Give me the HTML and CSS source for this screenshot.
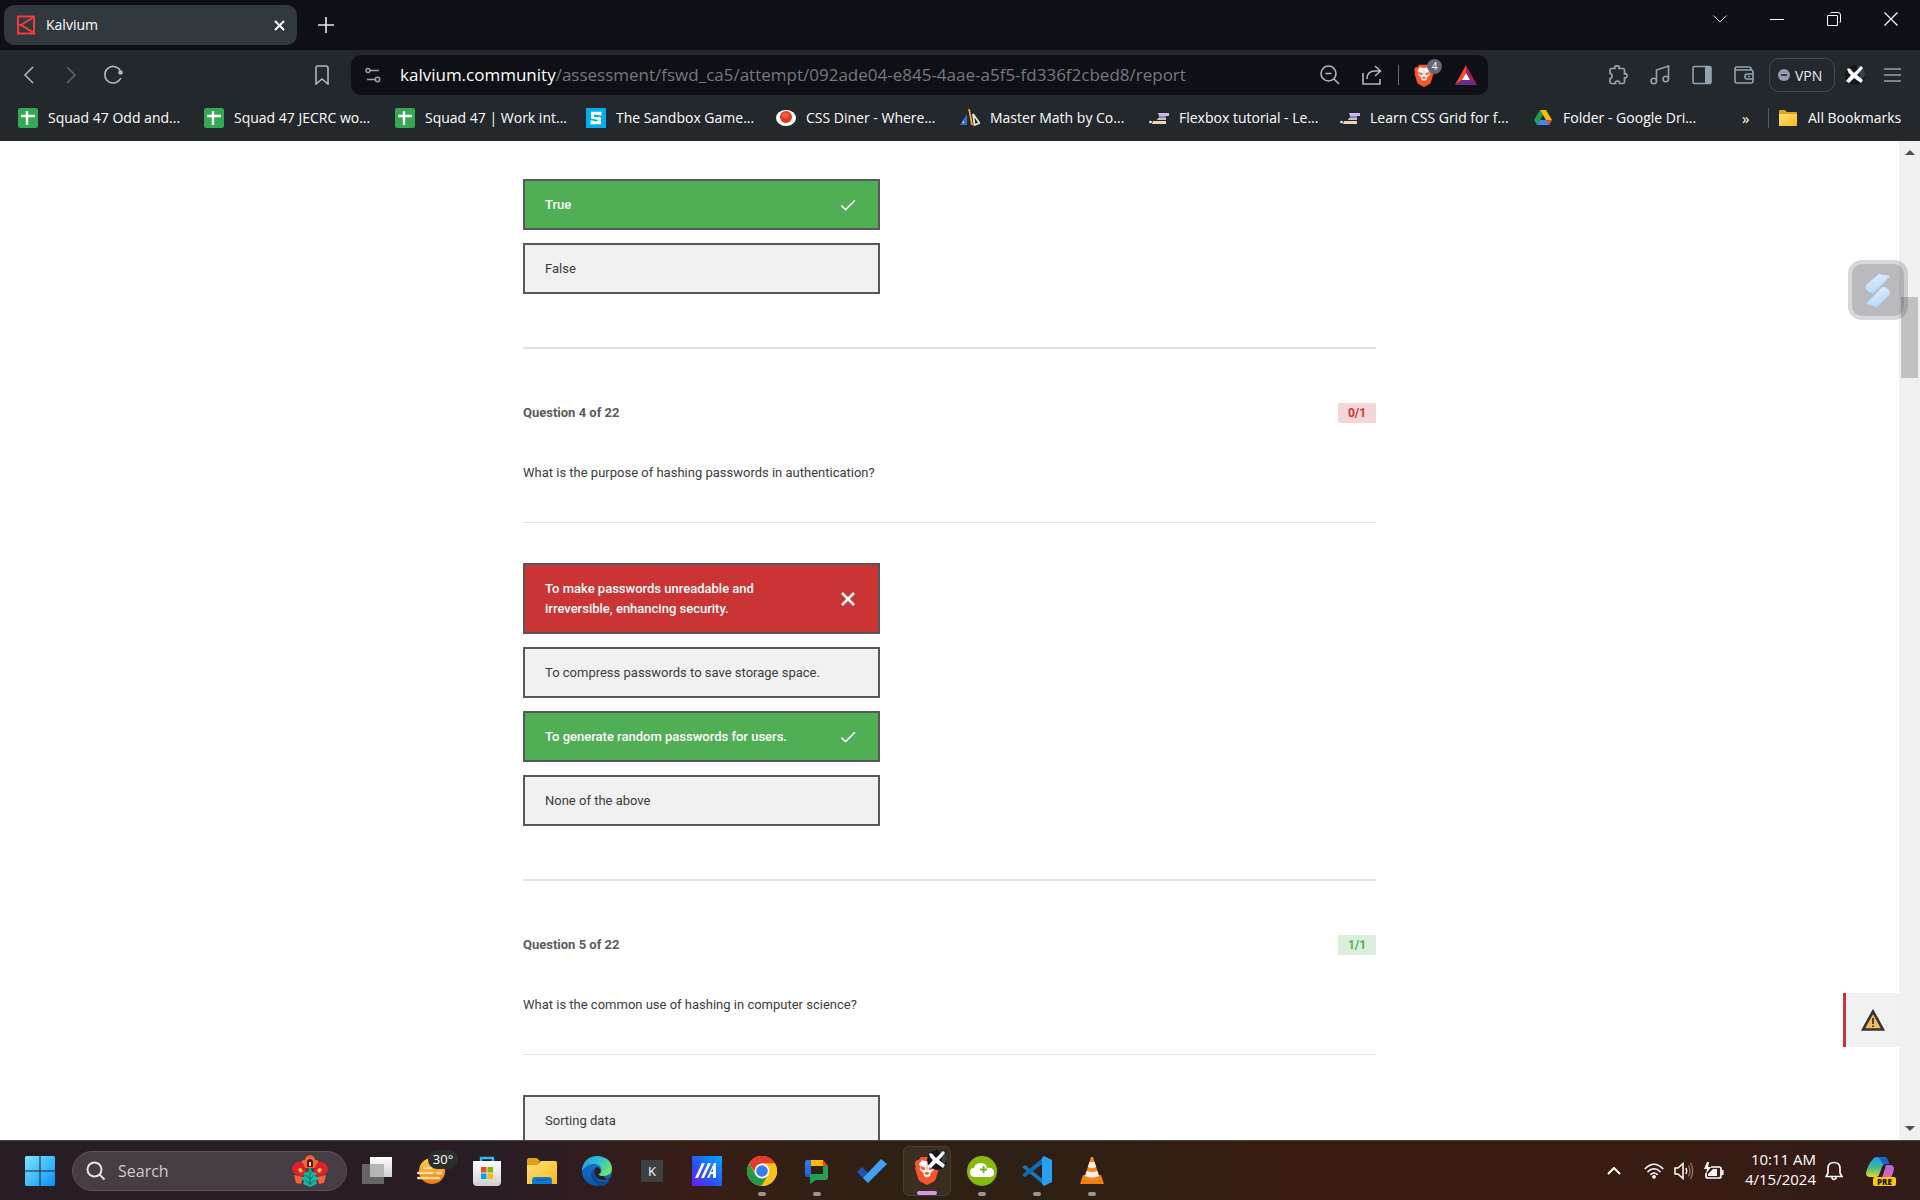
FILE: index.html
```html
<!DOCTYPE html>
<html lang="en">
<head>
<meta charset="utf-8">
<title>Kalvium</title>
<link rel="stylesheet" href="styles.css">
</head>
<body>
<svg class="defs" aria-hidden="true">
  <defs>
    <symbol id="sheet" viewBox="0 0 20 20"><rect width="20" height="20" rx="2" fill="#34a853"/><path d="M9 3v14M3 8h14" stroke="#fff" stroke-width="2.4"/></symbol>
    <symbol id="fcc" viewBox="0 0 20 20"><path d="M9 5h11v3H10z" fill="#c9b6f2"/><path d="M10 8h7v2h-7z" fill="#8f86a8"/><path d="M9 10h8v2H8z" fill="#b9c9cb"/><path d="M4 13h13v3H3z" fill="#f3d3b3"/><circle cx="1.500" cy="14" r="1.300" fill="#fff"/></symbol>
    <symbol id="lion" viewBox="0 0 24 28"><path d="M6 1h12l2 3 2-.5L24 7l-1 3 .5 2-3 10q-.5 1.500-2 2.500L12 28l-6.500-3.500q-1.500-1-2-2.500l-3-10L1 10 0 7l2-3.500L4 4z" fill="#fb542b"/><path d="M12 5l5-1 3 4-1.500 2 .5 3-4 4 .5 1.500-3.500 3-3.500-3 .5-1.500-4-4 .5-3L4 8l3-4z" fill="#fff"/><path d="M6 10l4 1.500-.5 2-3-1zM18 10l-4 1.500.5 2 3-1zM10 17l2 1 2-1-.5-1.200h-3zM12 7v7M10 22l2-1.500 2 1.500-2 1.500z" fill="#fb542b" stroke="#fb542b" stroke-width=".6"/></symbol>
    <symbol id="avatar" viewBox="0 0 20 20"><circle cx="10" cy="10" r="10" fill="#14161c"/><path d="M12 0a10 10 0 0 1 8 10l-4 6z" fill="#38404c"/><path d="M2 4q3-2 5 2l2 2 7-7 2 2-6 7 6 5-2 3-7-5-5 5-3-2 5-6q-3-2-4-6z" fill="#fff"/></symbol>
    <symbol id="check" viewBox="0 0 24 24"><path d="M9 16.170 4.830 12l-1.420 1.410L9 19 21 7l-1.410-1.410z" fill="currentColor"/></symbol>
    <linearGradient id="win" x2="1" y2="1"><stop stop-color="#7be9ff"/><stop offset="1" stop-color="#0a90f5"/></linearGradient>
    <linearGradient id="gray" x2="0" y2="1"><stop stop-color="#fff"/><stop offset="1" stop-color="#cfcfcf"/></linearGradient>
    <linearGradient id="sun" x2="0" y2="1"><stop stop-color="#ffd34d"/><stop offset="1" stop-color="#ee7410"/></linearGradient>
    <linearGradient id="gold" x2="1" y2="1"><stop stop-color="#ffe07a"/><stop offset="1" stop-color="#f9b917"/></linearGradient>
    <linearGradient id="edgeTop" x2="1" y2=".5"><stop stop-color="#1d9be0"/><stop offset=".6" stop-color="#35c1d0"/><stop offset="1" stop-color="#6fe06a"/></linearGradient>
    <linearGradient id="edgeLow" x2="0" y2="1"><stop stop-color="#1079d0"/><stop offset="1" stop-color="#0f57a8"/></linearGradient>
    <linearGradient id="asus" x1="1" x2="0" y2="1"><stop stop-color="#00a8ff"/><stop offset=".6" stop-color="#2a50f5"/><stop offset="1" stop-color="#6a1bff"/></linearGradient>
    <linearGradient id="cop" x2="0" y2="1"><stop stop-color="#1d9cf0"/><stop offset=".5" stop-color="#3bb892"/><stop offset="1" stop-color="#e8d52c"/></linearGradient>
    <linearGradient id="cop2" x2="0" y2="1"><stop stop-color="#a965f0"/><stop offset="1" stop-color="#f8687c"/></linearGradient>
    <linearGradient id="ribbon" x2=".4" y2="1"><stop stop-color="#e4f2fe"/><stop offset="1" stop-color="#b6d9fb"/></linearGradient>
  </defs>
</svg>

<header class="browser">
  <div class="tabstrip">
    <div class="tab">
      <svg width="18" height="20" viewBox="0 0 18 20"><path d="M1 1.500h16v17H1zM17 2 4 10l13 8M2 10h3" fill="none" stroke="#f23b3b" stroke-width="2"/></svg>
      <span class="tab-title">Kalvium</span>
      <button class="bare" aria-label="Close tab"><svg width="11" height="11" viewBox="0 0 11 11"><path d="M1 1l9 9M10 1l-9 9" stroke="#fff" stroke-width="2"/></svg></button>
    </div>
    <button class="bare new-tab" aria-label="New tab"><svg width="16" height="16" viewBox="0 0 16 16"><path d="M8 0v16M0 8h16" stroke="#e8e8ec" stroke-width="1.600"/></svg></button>
    <div class="window-controls">
      <button class="bare" aria-label="Search tabs"><svg width="14" height="8" viewBox="0 0 14 8"><path d="M.5.5 7 7 13.500.5" fill="none" stroke="#d5d5d8"/></svg></button>
      <button class="bare" aria-label="Minimize"><svg width="14" height="14" viewBox="0 0 14 14"><path d="M0 7.500h14" stroke="#fff"/></svg></button>
      <button class="bare" aria-label="Restore"><svg width="14" height="14" viewBox="0 0 14 14"><path d="M.5 3.500h10v10H.5zM3 1.500q.5-1 2-1h6q2.500 0 2.500 2.500v6q0 1.500-1 2" fill="none" stroke="#fff"/></svg></button>
      <button class="bare" aria-label="Close window"><svg width="14" height="14" viewBox="0 0 14 14"><path d="M.5.5l13 13M13.500.5l-13 13" stroke="#fff" stroke-width="1.200"/></svg></button>
    </div>
  </div>

  <div class="toolbar">
    <div class="nav">
      <button class="bare" aria-label="Back"><svg width="20" height="20" viewBox="0 0 20 20"><path d="M14 2 6 10l8 8" fill="none" stroke="#a9b8c2" stroke-width="1.600"/></svg></button>
      <button class="bare" aria-label="Forward"><svg width="20" height="20" viewBox="0 0 20 20"><path d="m6 2 8 8-8 8" fill="none" stroke="#5d666c" stroke-width="1.600"/></svg></button>
      <button class="bare" aria-label="Reload"><svg width="20" height="20" viewBox="0 0 20 20"><path d="M17 5a8.300 8.300 0 1 0 .8 8M17 5v3" fill="none" stroke="#a9b8c2" stroke-width="1.600"/><circle cx="17.500" cy="7.500" r="2.300" fill="#a9b8c2"/></svg></button>
    </div>
    <button class="bare save" aria-label="Bookmark this page"><svg width="14" height="20" viewBox="0 0 14 20"><path d="M1 3q0-2 2-2h8q2 0 2 2v16l-6-5-6 5z" fill="none" stroke="#a9b8c2" stroke-width="1.600"/></svg></button>
    <div class="address">
      <svg class="site-info" width="16" height="16" viewBox="0 0 16 16"><g fill="none" stroke="#a0a2a8" stroke-width="1.500"><circle cx="3" cy="3.500" r="2"/><path d="M5 3.500h9M2 12.500h8"/><circle cx="12.500" cy="12.500" r="2.200"/></g></svg>
      <div class="url" role="textbox" aria-label="Address"><span class="host">kalvium.community</span>/assessment/fswd_ca5/attempt/092ade04-e845-4aae-a5f5-fd336f2cbed8/report</div>
      <button class="bare" aria-label="Zoom"><svg width="20" height="20" viewBox="0 0 20 20"><g fill="none" stroke="#b4b6bb" stroke-width="1.600"><circle cx="8.500" cy="8.500" r="7.500"/><path d="m14 14 5 5M5.500 8.500h6"/></g></svg></button>
      <button class="bare share" aria-label="Share"><svg width="20" height="20" viewBox="0 0 20 20"><path d="M1 8v11h17v-5M5 14q0-8 8-8h5M13 1l5.500 5-5.500 5" fill="none" stroke="#b4b6bb" stroke-width="1.600"/></svg></button>
      <span class="bar"></span>
      <button class="bare shield" aria-label="Brave Shields"><svg width="20" height="23"><use href="#lion"/></svg><span class="count">4</span></button>
      <button class="bare" aria-label="Brave Rewards"><svg width="22" height="20" viewBox="0 0 22 20"><path d="M11 0v8l-4 7-7 5z" fill="#ff4724"/><path d="m11 0 11 20-7-5-4-7z" fill="#9e1f63"/><path d="M0 20h22l-7-5H7z" fill="#662d91"/><path d="m11 8 4 7H7z" fill="#fff"/></svg></button>
    </div>
    <div class="tools">
      <button class="bare" aria-label="Extensions"><svg width="20" height="20" viewBox="0 0 20 20"><path d="M2 5q0-1.500 1.500-1.500H7Q6 .8 9 .8t2 2.700h4q1.500 0 1.500 1.500v4q2.500-.8 2.500 1.800t-2.500 1.900V17q0 1.500-1.500 1.500h-3.500q.5-2.500-2-2.500t-2 2.500h-4Q2 18.500 2 17v-3.500q2 0 2-2.500T2 8.500z" fill="none" stroke="#93a3ae" stroke-width="1.700"/></svg></button>
      <button class="bare" aria-label="Media"><svg width="20" height="20" viewBox="0 0 20 20"><g fill="none" stroke="#93a3ae" stroke-width="1.600"><circle cx="3.800" cy="16" r="2.700"/><circle cx="15.800" cy="14" r="2.700"/><path d="M6.500 16V5l12-4v13"/></g></svg></button>
      <button class="bare" aria-label="Sidebar"><svg width="20" height="20" viewBox="0 0 20 20"><rect x="1" y="1.500" width="18" height="17" rx="1.500" fill="none" stroke="#93a3ae" stroke-width="1.600"/><path d="M13 1h6v18h-6z" fill="#93a3ae"/></svg></button>
      <button class="bare" aria-label="Wallet"><svg width="20" height="20" viewBox="0 0 20 20"><g fill="none" stroke="#93a3ae" stroke-width="1.600"><path d="M17 5V4q0-2-2-2H3Q1 2 1 4v12q0 2 2 2h14q2 0 2-2V7q0-2-2-2H3Q1 5 1 4"/><path d="M19 9h-6q-2 0-2 2.500t2 2.500h6M14 11.500h2"/></g></svg></button>
      <button class="vpn"><svg width="12" height="12" viewBox="0 0 12 12"><circle cx="6" cy="6" r="6" fill="#9899b0"/><path d="M3 6h6" stroke="#23272b" stroke-width="1.600"/></svg>VPN</button>
      <button class="bare" aria-label="Profile"><svg width="20" height="20"><use href="#avatar"/></svg></button>
      <button class="bare" aria-label="Menu"><svg width="17" height="14" viewBox="0 0 17 14"><path d="M0 1h17M0 7h17M0 13h17" stroke="#93a3ae" stroke-width="1.500"/></svg></button>
    </div>
  </div>

  <nav class="bookmarks">
    <a href="#"><svg><use href="#sheet"/></svg>Squad 47 Odd and...</a>
    <a href="#"><svg><use href="#sheet"/></svg>Squad 47 JECRC wo...</a>
    <a href="#"><svg><use href="#sheet"/></svg>Squad 47 | Work int...</a>
    <a href="#"><svg viewBox="0 0 20 20"><path d="M0 0h20v20H0z" fill="#00adef"/><path d="M14 7.500V5.300H6.500v4l7 1.400v4H6v-2.200" fill="none" stroke="#fff" stroke-width="3"/></svg>The Sandbox Game...</a>
    <a href="#"><svg viewBox="0 0 20 20"><ellipse cx="10" cy="10" rx="10" ry="8" fill="#fff"/><circle cx="10" cy="9" r="6" fill="#e0381c"/><ellipse cx="9.500" cy="7.500" rx="3.500" ry="3" fill="#f8593c"/></svg>CSS Diner - Where...</a>
    <a href="#"><svg viewBox="0 0 20 20"><path d="M7 6v11H0z" fill="#3d6fc4"/><path d="M4 12v3H2z" fill="#b8d0ff"/><path d="m8 1 2 .2 3 15.800h-2L9.500 8z" fill="#f0a33a"/><path d="M13 6l6.500 9-5 2z" fill="none" stroke="#e6ecd2" stroke-width="1.800"/></svg>Master Math by Co...</a>
    <a href="#"><svg><use href="#fcc"/></svg>Flexbox tutorial - Le...</a>
    <a href="#"><svg><use href="#fcc"/></svg>Learn CSS Grid for f...</a>
    <a href="#"><svg viewBox="0 0 20 20"><path d="M7 2 1 12l3 5L10 7z" fill="#1e9e4e"/><path d="M7 2h6l6 10h-6z" fill="#fbbc05"/><path d="M4 17l3-5h12l-3 5z" fill="#4285f4"/><path d="M13 12h6l-3 5z" fill="#ea4335"/></svg>Folder - Google Dri...</a>
    <button class="bare more" aria-label="More bookmarks">»</button>
    <a href="#" class="all"><svg viewBox="0 0 20 20"><path d="M1 3q0-1 1-1h5l2 2h9q1 0 1 1v12q0 1-1 1H2q-1 0-1-1z" fill="#e0a21b"/><path d="M1 6h18v11q0 1-1 1H2q-1 0-1-1z" fill="url(#gold)"/></svg>All Bookmarks</a>
  </nav>
</header>

<div class="viewport">
  <main class="report">
    <section class="question">
      <ul class="options">
        <li class="option correct"><span>True</span><svg><use href="#check"/></svg></li>
        <li class="option"><span>False</span></li>
      </ul>
    </section>

    <section class="question">
      <div class="heading"><h2>Question 4 of 22</h2><span class="score lost">0/1</span></div>
      <p class="prompt">What is the purpose of hashing passwords in authentication?</p>
      <ul class="options">
        <li class="option wrong"><span>To make passwords unreadable and irreversible, enhancing security.</span><svg viewBox="0 0 20 20"><path d="m4 4 12 12M16 4 4 16" stroke="currentColor" stroke-width="2.600"/></svg></li>
        <li class="option"><span>To compress passwords to save storage space.</span></li>
        <li class="option correct"><span>To generate random passwords for users.</span><svg><use href="#check"/></svg></li>
        <li class="option"><span>None of the above</span></li>
      </ul>
    </section>

    <section class="question">
      <div class="heading"><h2>Question 5 of 22</h2><span class="score won">1/1</span></div>
      <p class="prompt">What is the common use of hashing in computer science?</p>
      <ul class="options">
        <li class="option"><span>Sorting data</span></li>
      </ul>
    </section>
  </main>

  <div class="scrollbar" aria-hidden="true">
    <svg width="10" height="5" viewBox="0 0 10 5"><path d="M5 0l5 5H0z" fill="#505050"/></svg>
    <div class="track"><div class="thumb"></div></div>
    <svg width="10" height="5" viewBox="0 0 10 5"><path d="M0 0h10L5 5z" fill="#505050"/></svg>
  </div>

  <button class="assistant" aria-label="Open assistant"><svg width="26" height="34" viewBox="0 0 26 34"><path d="M14 1l11 2L9 20q-5 1-8-4-1-3 1-5z" fill="url(#ribbon)"/><path d="M12 34 1 31l16-17q6 0 8 5 0 3-2 4z" fill="url(#ribbon)"/></svg></button>
  <button class="report-issue" aria-label="Report an issue"><svg width="24" height="22" viewBox="0 0 24 22"><path d="M12 2.500 22 20.500H2z" fill="#f6bb5c" stroke="#333638" stroke-width="2.600"/><path d="M12 9v6M12 16.500v1.500" stroke="#333638" stroke-width="1.800"/></svg></button>
</div>

<footer class="taskbar">
  <button class="bare start" aria-label="Start"><svg width="30" height="30" viewBox="0 0 30 30"><path d="M1 0h13.500v14.500H0V1zM15.500 0H29l1 1v13.500H15.500zM0 15.500h14.500V30H1l-1-1zM15.500 15.500H30V29l-1 1H15.500z" fill="url(#win)"/></svg></button>
  <label class="search">
    <svg width="20" height="20" viewBox="0 0 20 20"><g fill="none" stroke="#e6e3e6" stroke-width="2"><circle cx="8.500" cy="8.500" r="7"/><path d="m13.500 13.500 5 5"/></g></svg>
    <input type="text" placeholder="Search" aria-label="Search">
    <svg width="36" height="32" viewBox="0 0 36 32"><path d="M10 11Q8 4 13 5q0-4 5-5 5 1 5 5 5-1 3 6-3 3-8 2-5 1-8-2z" fill="#ee6a35"/><path d="M15 6q3-4 6 0v6h-6z" fill="#6a1410"/><path d="M17 7h2v4h-2z" fill="#ffd9b0"/><path d="M2 9Q8 4 12 10l3 8-4 3Q2 21 0 15q0-4 2-6zM34 9q-6-5-10 1l-3 8 4 3q9 0 11-6 0-4-2-6z" fill="#d8232d"/><path d="M2 20l9 2-2 7-5-1zM34 20l-9 2 2 7 5-1z" fill="#f4603b"/><path d="m6 14 3-1 2 3-3 2zM30 14l-3-1-2 3 3 2z" fill="#f7c531"/><path d="M18 12l2 5 5 1-2 3 4 2-3 3 1 3-7 3-7-3 1-3-3-3 4-2-2-3 5-1z" fill="#18b8a0"/><path d="M18 16v14M14 20l4 5 4-5M13 25l5 4 5-4" fill="none" stroke="#08705f"/></svg>
  </label>
  <div class="apps">
    <button class="bare" aria-label="Task view"><svg width="30" height="30" viewBox="0 0 30 30"><path d="M8 1h22v20H8z" fill="url(#gray)"/><path d="M0 8h22v20H0z" fill="#777" opacity=".8"/><path d="M8 8h14v13H8z" fill="#b5b5b5"/></svg></button>
    <button class="bare weather" aria-label="Weather"><svg width="30" height="30" viewBox="0 0 30 30"><circle cx="15" cy="15" r="13" fill="url(#sun)"/><path d="M7 12h7M1 17h15M20 17h4M1 22h21" stroke="#f5dc9c" stroke-width="2.400" stroke-linecap="round"/></svg><span class="degrees">30°</span></button>
    <button class="bare" aria-label="Store"><svg width="30" height="30" viewBox="0 0 30 30"><path d="M9 7V2h12v5" fill="none" stroke="#35b8ef" stroke-width="2.400"/><path d="M1 5h28v21q0 4-4 4H5q-4 0-4-4z" fill="url(#gray)"/><path d="M9 11h5.500v5.500H9z" fill="#f04e23"/><path d="M15.500 11H21v5.500h-5.500z" fill="#7fba00"/><path d="M9 17.500h5.500V23H9z" fill="#00a4ef"/><path d="M15.500 17.500H21V23h-5.500z" fill="#ffb900"/></svg></button>
    <button class="bare" aria-label="File Explorer"><svg width="30" height="30" viewBox="0 0 30 30"><path d="M0 4q0-2 2-2h8l3 3-3 5H0z" fill="#e0a015"/><path d="M0 9h10l4-4h14q2 0 2 2v21H0z" fill="url(#gold)"/><path d="M5 28v-4q0-3 3-3h14q3 0 3 3v4z" fill="#0f7bd4"/><path d="M9 24h12" stroke="#0a5ea8" stroke-width="1.500"/></svg></button>
    <button class="bare" aria-label="Edge"><svg width="30" height="30" viewBox="0 0 30 30"><circle cx="15" cy="15" r="15" fill="url(#edgeLow)"/><path d="M0 15Q1 1 15 0q14 1 15 12 0 8-9 8-4 0-4-2 3-2 2-6Q16 7 10 8 3 9 0 15z" fill="url(#edgeTop)"/><path d="M11 14q-3 3-1 9 3 7 10 7 5-1 8-6-3 2-7 2-8 0-10-12z" fill="#0b4a98"/><path d="M14 11q-3 3-1 8 2 5 9 5 4 0 6-2 0 1-1 2-3-1-6-4h-1q-4 0-3-2 3-2 1-5-1-2-4-2z" fill="#2a2023"/></svg></button>
    <button class="bare" aria-label="Keyboard app"><span class="key">K</span></button>
    <button class="bare" aria-label="MyASUS"><svg width="30" height="30" viewBox="0 0 30 30"><path d="M0 0h30v30H0z" fill="url(#asus)"/><path d="M3 22 10 7h3L6 22zM9 22l7-15h3l-7 15z" fill="#fff"/><path fill-rule="evenodd" d="M15 22l7-15h2v15h-3v-4h-2l-2 4zM21 12l-2 4h2z" fill="#fff"/></svg></button>
    <button class="bare running" aria-label="Chrome"><svg width="30" height="30" viewBox="0 0 30 30"><circle cx="15" cy="15" r="15" fill="#fbc116"/><path d="M2 7.500A15 15 0 0 1 28 7.500H15L9 18z" fill="#e33b2e"/><path d="M2 7.500A15 15 0 0 0 14.500 30L21 19l-12 .500z" fill="#229a4a"/><path d="M15 7.500h13A15 15 0 0 1 14.500 30L22 18z" fill="#fbc116"/><circle cx="15" cy="15" r="7.500" fill="#fff"/><circle cx="15" cy="15" r="5.800" fill="#3b7ded"/></svg></button>
    <button class="bare running" aria-label="Chat"><svg width="30" height="30" viewBox="0 0 30 30"><path d="M9 4h12v6H9z" fill="#ffb904"/><path d="M3 6q0-2 2-2h4v6H3z" fill="#3075e0"/><path d="M3 10h6v8H3q0 2 0 0z" fill="#2a6de0"/><path d="M21 4l5 6h-5z" fill="#e8432f"/><path d="M3 17h6v4H5q-2 0-2-2z" fill="#1b64c8"/><path d="M21 10h5v12q0 2-2 2H14l-6 4V18h13z" fill="#24a150"/></svg></button>
    <button class="bare" aria-label="To Do"><svg width="30" height="30" viewBox="0 0 30 30"><path d="M0 16l5-5 10 10-4 6z" fill="#1e56b8"/><path d="M11 27 6 22 24 3l6 5z" fill="#41a0f0"/></svg></button>
    <button class="bare running active" aria-label="Brave"><svg width="26" height="29"><use href="#lion"/></svg><svg class="profile" width="20" height="20"><use href="#avatar"/></svg></button>
    <button class="bare running" aria-label="Cloud sync"><svg width="30" height="30" viewBox="0 0 30 30"><circle cx="15" cy="15" r="15" fill="#86bb0e"/><path d="M8 21q-5 0-5-5 0-4 4-4 1-5 7-5 5 0 6 5 7-1 7 5 0 4-5 4z" fill="#fff"/><path d="M16.500 10v7M13 13.500h7" stroke="#7ab51d" stroke-width="2"/></svg></button>
    <button class="bare running" aria-label="Visual Studio Code"><svg width="30" height="30" viewBox="0 0 30 30"><path d="M0 11l3-2 20 16v5z" fill="#1577c0"/><path d="M0 19l3 2L23 6V0z" fill="#0f6cb5"/><path d="M22 0l8 4v22l-8 4-2-2V2z" fill="#26a0f0"/></svg></button>
    <button class="bare running" aria-label="VLC"><svg width="30" height="30" viewBox="0 0 30 30"><path d="M6 19h18l3 9H3z" fill="#f07f0e"/><path d="M14 1h2l7 22q-8 4-16 0z" fill="#f58a1c"/><path d="m12.500 6-1.700 5q4 2 8.400 0l-1.700-5zM9.500 15 8 20q7 3 14 0l-1.500-5q-5 2-11 0z" fill="#f1eeeb"/></svg></button>
  </div>
  <div class="tray">
    <button class="bare" aria-label="Show hidden icons"><svg width="14" height="8" viewBox="0 0 14 8"><path d="m1 7 6-6 6 6" fill="none" stroke="#fff" stroke-width="2"/></svg></button>
    <button class="bare network" aria-label="Network, volume and battery">
      <svg width="20" height="16" viewBox="0 0 20 16"><g fill="none" stroke="#fff" stroke-width="1.600"><path d="M.8 6q9.200-9.500 18.400 0M3.500 9q6.500-6.500 13 0M6.300 11.800q3.700-3.600 7.400 0"/></g><circle cx="10" cy="13.800" r="1.900" fill="#fff"/></svg>
      <svg width="20" height="18" viewBox="0 0 20 18"><path d="M1 6h3l5-4.500v15L4 12H1z" fill="none" stroke="#fff" stroke-width="1.500"/><path d="M12 6q1.500 3 0 6" fill="none" stroke="#fff" stroke-width="1.500"/><path d="M14.500 3.500q3 5.500 0 11M16.500 1q4.500 8 0 16" fill="none" stroke="#8a6c64" stroke-width="1.500"/></svg>
      <svg width="20" height="18" viewBox="0 0 20 18"><path d="M7 5h8q2 0 2 2v7q0 2-2 2H4q-2 0-2-2v-3" fill="none" stroke="#fff" stroke-width="1.700"/><path d="M18 8h1.500v5H18zM9 7h4v7H4v-2z" fill="#fff"/><path d="m3 0-3 7h3l-1 5 5-7H4l1-5z" fill="#fff"/></svg>
    </button>
    <div class="clock"><span>10:11 AM</span><span>4/15/2024</span></div>
    <button class="bare" aria-label="Notifications"><svg width="18" height="20" viewBox="0 0 18 20"><path d="M9 1.500q6 0 6 6V12l2 3.500H1L3 12V7.500q0-6 6-6zM6.500 16.500q2.500 4 5 0" fill="none" stroke="#fff" stroke-width="1.600"/></svg></button>
    <button class="bare copilot" aria-label="Copilot"><svg width="30" height="28" viewBox="0 0 30 28"><path d="M7 2q1-2 4-2h7q3 0 4 4l1 3h-4q-2 0-3 3l-3 8q-1 2-3 2H4q-4 0-4-4 2-9 7-14z" fill="url(#cop)"/><path d="M12 0h6q3 0 4 4l1 3h-6z" fill="#1c62d4"/><path d="M20 8h4q4 0 4 4-2 8-4 11-1 2-4 2h-7l3-4z" fill="url(#cop2)"/></svg><span class="pre">PRE</span></button>
  </div>
</footer>
</body>
</html>
```
FILE: styles.css
```css
* {
  box-sizing: border-box;
}

body {
  display: flex;
  flex-direction: column;
  height: 100vh;
  margin: 0;
  overflow: hidden;
  background: #fff;
  font-family: "Open Sans", "Noto Sans", sans-serif;
}

svg {
  display: block;
  flex: none;
}

.defs {
  position: absolute;
  width: 0;
  height: 0;
}

.bare {
  display: grid;
  place-items: center;
  flex: none;
  padding: 0;
  border: 0;
  background: none;
  color: inherit;
  font: inherit;
}

/* Browser chrome */
.browser {
  flex: none;
  background: #23282c;
  color: #fff;
}

.tabstrip {
  display: flex;
  align-items: center;
  height: 50px;
  padding: 0 1px 0 4px;
  background: #0e1015;
}

.tab {
  display: flex;
  align-items: center;
  gap: 11px;
  width: 293px;
  height: 40px;
  padding: 0 12px 0 13px;
  border-radius: 10px;
  background: #31393e;
}

.tab-title {
  flex: 1;
  padding-bottom: 2px;
  font-size: 14px;
}

.new-tab {
  width: 58px;
  height: 40px;
}

.window-controls {
  display: flex;
  align-self: flex-start;
  margin-left: auto;
}

.window-controls .bare {
  width: 57px;
  height: 38px;
}

.toolbar {
  display: flex;
  align-items: center;
  height: 50px;
  padding: 0 11px 0 8px;
}

.nav {
  display: flex;
}

.nav .bare,
.tools .bare {
  width: 42px;
  height: 40px;
}

.save {
  width: 56px;
  height: 40px;
  margin-left: 160px;
}

.address {
  display: flex;
  flex: 1;
  align-items: center;
  height: 40px;
  margin-left: 1px;
  padding: 0 11px 0 14px;
  border-radius: 10px;
  background: #0e1015;
}

.url {
  flex: 1;
  padding: 0 0 2px 19px;
  color: #77797e;
  font-size: 17px;
  white-space: nowrap;
}

.host {
  color: #fff;
}

.share {
  margin: 0 16px 0 22px;
}

.bar {
  width: 1px;
  height: 20px;
  background: #6b6d72;
}

.shield {
  position: relative;
  margin: 0 21px 0 15px;
}

.count {
  position: absolute;
  top: -5px;
  left: 13px;
  width: 15px;
  border-radius: 8px;
  background: #666878;
  font-size: 10px;
  line-height: 15px;
}

.tools {
  display: flex;
  align-items: center;
  margin-left: 109px;
}

.tools .bare:nth-last-child(2) {
  width: 40px;
}

.tools .bare:last-child {
  width: 34px;
}

.vpn {
  display: flex;
  align-items: center;
  gap: 5px;
  width: 66px;
  height: 34px;
  margin-left: 4px;
  padding: 0 8px;
  border: 1px solid #414b4e;
  border-radius: 10px;
  background: none;
  color: #e9edf0;
  font: 14px "Open Sans", "Noto Sans", sans-serif;
}

.bookmarks {
  display: grid;
  grid-template-columns: 186px 191px 191px 190px 184px 189px 191px 193px 1fr 36px 142px;
  align-items: center;
  height: 41px;
  padding: 0 0 6px 18px;
}

.bookmarks a {
  display: flex;
  align-items: center;
  gap: 10px;
  color: #fff;
  font-size: 14px;
  text-decoration: none;
  white-space: nowrap;
}

.bookmarks svg {
  width: 20px;
  height: 20px;
}

.bookmarks .more {
  justify-self: start;
  font-size: 15px;
}

.bookmarks .all {
  padding-left: 9px;
  border-left: 1px solid #565b5f;
}

.bookmarks .all {
  margin-left: -10px;
}

/* Page */
.viewport {
  position: relative;
  display: flex;
  flex: 1;
  min-height: 0;
  overflow: hidden;
}

.report {
  flex: 1;
  max-width: 853px;
  margin: 0 auto;
  padding-top: 38px;
  color: #3c3c3c;
  font-family: Roboto, sans-serif;
  font-size: 13px;
  line-height: 20px;
}

.question + .question {
  margin-top: 53px;
  padding-top: 54px;
  border-top: 2px solid #e2e2e2;
}

.heading {
  display: flex;
  align-items: center;
  justify-content: space-between;
}

.heading h2 {
  margin: 0;
  color: #5b5b5b;
  font-size: 13px;
}

.score {
  width: 38px;
  font-size: 12px;
  font-weight: 700;
  text-align: center;
}

.lost {
  background: #f4d6d7;
  color: #ca3435;
}

.won {
  background: #dcefdd;
  color: #50af55;
}

.prompt {
  margin: 40px 0;
  padding-bottom: 39px;
  border-bottom: 1px solid #e2e2e2;
}

.options {
  display: grid;
  gap: 13px;
  width: 357px;
  margin: 0;
  padding: 0;
  list-style: none;
}

.option {
  display: flex;
  align-items: center;
  justify-content: space-between;
  gap: 20px;
  padding: 14px 20px 13px;
  border: 2px solid #585858;
  background: #f1f1f1;
}

.option svg {
  width: 20px;
  height: 20px;
}

.correct {
  background: #50af55;
  color: #fff;
  font-weight: 500;
}

.wrong {
  background: #ca3435;
  color: #fff;
  font-weight: 500;
}

.scrollbar {
  display: flex;
  flex-direction: column;
  align-items: center;
  width: 21px;
  padding: 9px 0;
  background: #f0f0f0;
}

.track {
  flex: 1;
  width: 17px;
  padding-top: 142px;
}

.thumb {
  height: 81px;
  background: #c1c1c1;
}

.assistant {
  position: absolute;
  top: 119px;
  right: 12px;
  display: grid;
  place-items: center;
  width: 60px;
  height: 60px;
  padding: 0;
  border: 4px solid rgba(60, 62, 75, 0.2);
  border-radius: 14px;
  background: rgba(60, 62, 75, 0.36);
  background-clip: padding-box;
}

.report-issue {
  position: absolute;
  right: 21px;
  bottom: 93px;
  display: grid;
  place-items: center;
  width: 56px;
  height: 54px;
  padding: 0;
  border: 0;
  border-left: 3px solid #ca3435;
  background: #f1f1f1;
}

/* Taskbar */
.taskbar {
  display: flex;
  flex: none;
  align-items: center;
  height: 60px;
  border-top: 1px solid #4b4442;
  background: linear-gradient(90deg, #281d25 0%, #291d25 26%, #381d17 36%, #2e2014 47%, #2e2014 54%, #391c14 68%, #391c14 88%, #301b19 100%);
  color: #fff;
}

.start {
  width: 64px;
  margin-left: 8px;
}

.search {
  display: flex;
  align-items: center;
  width: 275px;
  height: 40px;
  padding: 0 18px 0 13px;
  border: 1px solid #5b5158;
  border-radius: 20px;
  background: #463c43;
}

.search input {
  flex: 1;
  min-width: 0;
  padding: 0 0 0 12px;
  border: 0;
  background: none;
  color: #fff;
  font: 16px "Open Sans", "Noto Sans", sans-serif;
}

.search input::placeholder {
  color: #cfcacd;
  opacity: 1;
}

.apps {
  display: flex;
  gap: 7px;
  margin-left: 6px;
}

.apps .bare {
  position: relative;
  width: 48px;
  height: 50px;
}

.degrees {
  position: absolute;
  top: 4px;
  right: -2px;
  width: 30px;
  border-radius: 9px;
  background: #2d2d2d;
  font-size: 13px;
  line-height: 19px;
}

.key {
  width: 22px;
  background: #3e4142;
  font-size: 13px;
  line-height: 22px;
}

.running::after {
  position: absolute;
  bottom: 0;
  width: 8px;
  height: 4px;
  border-radius: 2px;
  background: #9b9590;
  content: "";
}

.apps .active {
  border: 1px solid #4a3e33;
  border-radius: 6px;
  background: #3a2d22;
}

.active::after {
  width: 20px;
  background: #d49be0;
}

.profile {
  position: absolute;
  top: 3px;
  right: 3px;
}

.tray {
  display: flex;
  align-items: center;
  gap: 9px;
  margin-left: auto;
  padding-right: 24px;
}

.network {
  display: flex;
  gap: 10px;
  margin-left: 14px;
}

.clock {
  display: grid;
  width: 83px;
  padding-bottom: 4px;
  font-size: 15px;
  line-height: 20px;
  text-align: right;
}

.copilot {
  position: relative;
  margin-left: 14px;
}

.pre {
  position: absolute;
  right: 0;
  bottom: -1px;
  width: 23px;
  border-radius: 2px;
  background: #fdc70c;
  color: #201400;
  font-size: 8px;
  font-weight: 800;
  line-height: 9px;
}
```
